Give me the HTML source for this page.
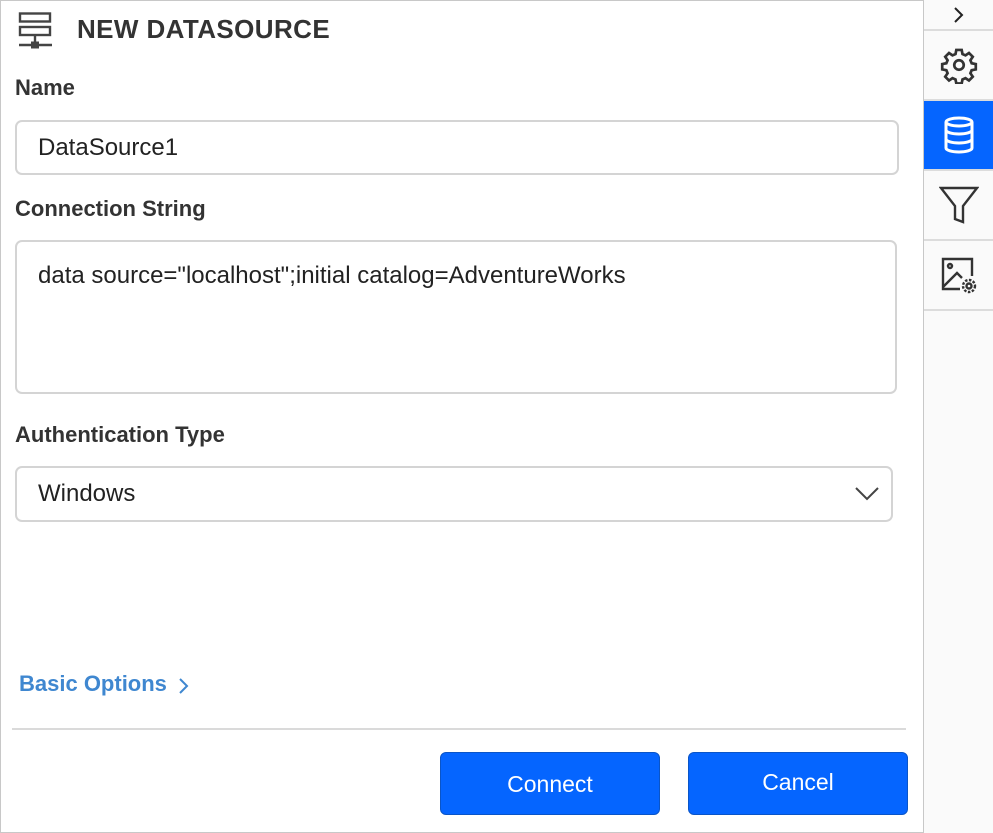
<!DOCTYPE html>
<html><head><style>
*{box-sizing:border-box;margin:0;padding:0}
body{width:993px;height:833px;background:#fff;font-family:"Liberation Sans",Arial,sans-serif;position:relative;overflow:hidden;color:#333}
.frame{position:absolute;left:0;top:0;width:993px;height:833px;border:1px solid #c8c8c8}
.side{position:absolute;left:923px;top:0;width:70px;height:833px;background:#fafafa;border-left:1px solid #c8c8c8}
.tab{position:absolute;left:0;width:69px;border-bottom:2px solid #dcdcdc;display:flex;align-items:center;justify-content:center}
.lbl{position:absolute;left:15px;font-size:22px;font-weight:bold;color:#333}
.box{position:absolute;border:2px solid #d4d4d4;border-radius:7px;font-size:24px;color:#222;padding-left:21px}
.btn{position:absolute;top:752px;width:220px;height:63px;background:#0565ff;border:1px solid #0a55c8;border-radius:6px;color:#fff;font-size:23px;display:flex;align-items:center;justify-content:center}
</style></head><body>
<div class="frame"></div>
<svg style="position:absolute;left:18px;top:12px" width="36" height="38" viewBox="0 0 36 38" fill="none" stroke="#444" stroke-width="2.4">
<rect x="2" y="1.5" width="30" height="8"/><rect x="2" y="15" width="30" height="8"/>
<line x1="17" y1="23" x2="17" y2="32"/><line x1="1" y1="33" x2="34" y2="33"/>
<rect x="13" y="29.5" width="8" height="7" fill="#444" stroke="none"/></svg>
<div style="position:absolute;left:77px;top:14px;font-size:26px;font-weight:bold;letter-spacing:0.4px;color:#333">NEW DATASOURCE</div>
<div class="lbl" style="top:75px">Name</div>
<div class="box" style="left:15px;top:120px;width:884px;height:55px;line-height:51px">DataSource1</div>
<div class="lbl" style="top:196px">Connection String</div>
<div class="box" style="left:15px;top:240px;width:882px;height:154px;padding-top:20px;line-height:28px">data source="localhost";initial catalog=AdventureWorks</div>
<div class="lbl" style="top:422px">Authentication Type</div>
<div class="box" style="left:15px;top:466px;width:878px;height:56px;line-height:52px">Windows
<svg style="position:absolute;right:12px;top:19px" width="24" height="14" viewBox="0 0 24 14" fill="none" stroke="#444" stroke-width="2"><path d="M1 1l11 11L23 1"/></svg></div>
<div style="position:absolute;left:19px;top:671px;font-size:22px;font-weight:bold;color:#3f87d0">Basic Options</div>
<svg style="position:absolute;left:178px;top:677px" width="12" height="18" viewBox="0 0 12 18" fill="none" stroke="#3f87d0" stroke-width="2"><path d="M2 2l7 7-7 7"/></svg>
<div style="position:absolute;left:12px;top:728px;width:894px;height:2px;background:#dadada"></div>
<div class="btn" style="left:440px"><span style="margin-top:2px">Connect</span></div>
<div class="btn" style="left:688px"><span style="margin-top:-3px">Cancel</span></div>
<div class="side">
<div class="tab" style="top:0;height:31px"><svg width="12" height="16" viewBox="0 0 12 16" fill="none" stroke="#222" stroke-width="2"><path d="M2 1l7 7-7 7"/></svg></div>
<div class="tab" style="top:31px;height:70px"><svg width="38" height="38" viewBox="0 0 24 24" fill="none" stroke="#333" stroke-width="1.7"><circle cx="12" cy="12" r="3"/><path d="M10.3 2.5h3.4l.5 2.6 1.9.8 2.2-1.5 2.4 2.4-1.5 2.2.8 1.9 2.6.5v3.4l-2.6.5-.8 1.9 1.5 2.2-2.4 2.4-2.2-1.5-1.9.8-.5 2.6h-3.4l-.5-2.6-1.9-.8-2.2 1.5-2.4-2.4 1.5-2.2-.8-1.9-2.6-.5v-3.4l2.6-.5.8-1.9-1.5-2.2 2.4-2.4 2.2 1.5 1.9-.8z"/></svg></div>
<div class="tab" style="top:101px;height:70px;background:#0565ff;border-bottom-color:#dcdcdc"><svg width="32" height="38" viewBox="0 0 32 38" fill="none" stroke="#fff" stroke-width="3"><ellipse cx="16" cy="6" rx="13" ry="4"/><path d="M3 6v26c0 2.2 5.8 4 13 4s13-1.8 13-4V6M3 14c0 2.2 5.8 4 13 4s13-1.8 13-4M3 23c0 2.2 5.8 4 13 4s13-1.8 13-4"/></svg></div>
<div class="tab" style="top:171px;height:70px"><svg width="40" height="38" viewBox="0 0 40 38" fill="none" stroke="#333" stroke-width="2.4"><path d="M2 2h36L24 20v16l-8-3V20z"/></svg></div>
<div class="tab" style="top:241px;height:70px"><svg width="38" height="38" viewBox="0 0 38 38" fill="none" stroke="#333" stroke-width="2.4"><path d="M20 33H3V3h29v17"/><circle cx="10" cy="10" r="2"/><path d="M3 31l14-14 5 5"/><circle cx="29" cy="30" r="2.5"/><circle cx="29" cy="30" r="6" stroke-dasharray="2.5 1.5"/></svg></div>
</div>
</body></html>
